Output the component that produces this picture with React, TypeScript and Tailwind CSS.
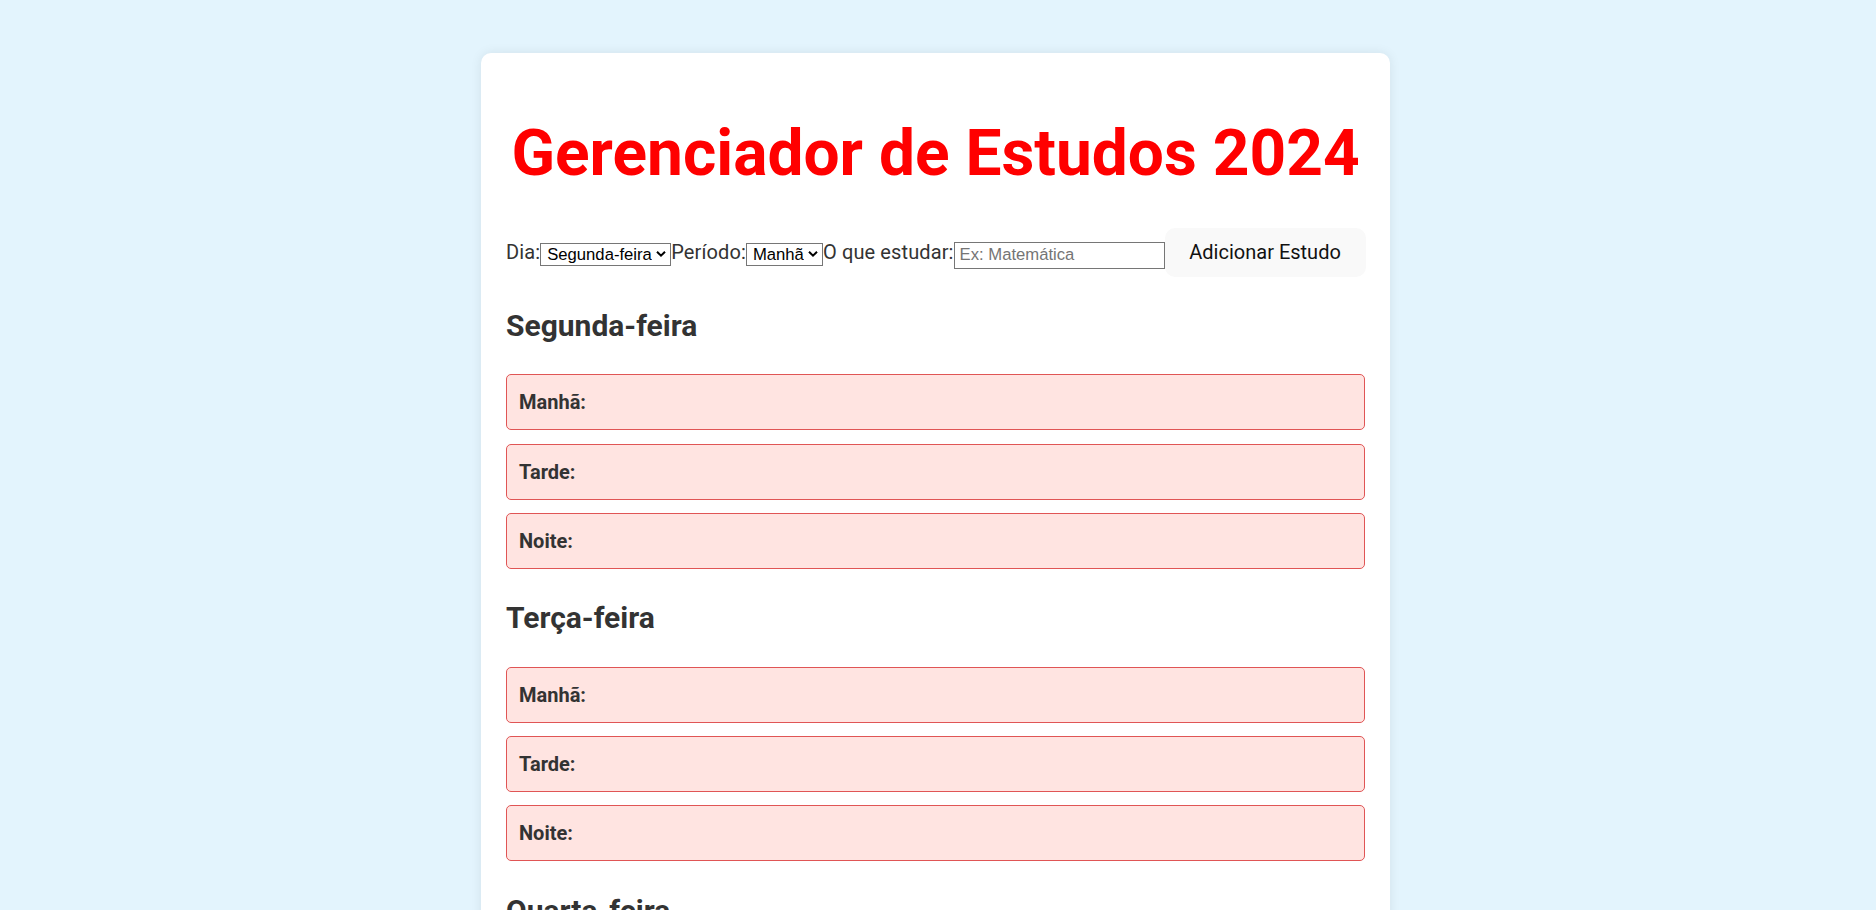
import React, { useState } from 'react';

const DAYS = ['Segunda-feira', 'Terça-feira', 'Quarta-feira', 'Quinta-feira', 'Sexta-feira', 'Sábado', 'Domingo'];
const PERIODS = ['Manhã', 'Tarde', 'Noite'];

type Plan = Record<string, Record<string, string[]>>;

const Chevron: React.FC = () => (
    <svg className="pointer-events-none absolute right-[5px] top-1/2 -translate-y-1/2 h-[7px] w-[10px]" viewBox="0 0 10 7" fill="none">
        <path d="M1 1.2l4 4 4-4" stroke="#000" strokeWidth={2} />
    </svg>
);

const NativeSelect: React.FC<{ value: string; options: string[]; onChange: (v: string) => void; width: string }> = ({ value, options, onChange, width }) => (
    <div className={`relative mt-[3px] shrink-0 ${width}`}>
        <select
            value={value}
            onChange={(e) => onChange(e.target.value)}
            className="appearance-none w-full h-[23px] border border-[#767676] bg-white pl-[6px] pr-[18px] text-[16.67px] leading-[21px] text-black font-['Liberation_Sans',Arial,sans-serif]"
        >
            {options.map((o) => <option key={o} value={o}>{o}</option>)}
        </select>
        <Chevron />
    </div>
);

const DaySection: React.FC<{ day: string; items: Record<string, string[]> }> = ({ day, items }) => (
    <section className="mb-[31.5px]">
        <h2 className="text-[30px] leading-[35px] font-bold text-[#333] mb-[31.3px]">{day}</h2>
        <div className="flex flex-col gap-[13.3px]">
            {PERIODS.map((p) => (
                <div key={p} className="h-[56px] px-[12px] py-[12px] rounded-[5px] border border-[#e05555] bg-[#ffe4e1] text-[20px] leading-[30px] text-[#333]">
                    <strong className="font-bold">{p}:</strong> {items[p].join(', ')}
                </div>
            ))}
        </div>
    </section>
);

export default function App() {
    const [day, setDay] = useState(DAYS[0]);
    const [period, setPeriod] = useState(PERIODS[0]);
    const [subject, setSubject] = useState('');
    const [plan, setPlan] = useState<Plan>(() =>
        Object.fromEntries(DAYS.map((d) => [d, Object.fromEntries(PERIODS.map((p) => [p, [] as string[]]))]))
    );

    const addStudy = () => {
        if (!subject.trim()) return;
        setPlan((prev) => ({ ...prev, [day]: { ...prev[day], [period]: [...prev[day][period], subject.trim()] } }));
        setSubject('');
    };

    return (
        <div className="min-h-screen bg-[#e3f4fd] pt-[53px] font-['Roboto','Liberation_Sans',sans-serif]">
            <div className="ml-[481px] w-[909px] rounded-[10px] bg-white px-[25px] pt-[25px] pb-[10px] shadow-[0_0_12px_rgba(0,0,0,0.08)]">
                <h1 className="mt-[41px] mb-[39px] text-center text-[64px] leading-[70px] font-bold text-[#ff0000]">
                    Gerenciador de Estudos 2024
                </h1>

                <div className="flex items-center whitespace-nowrap text-[20px] leading-[23px] text-[#333]">
                    <label className="shrink-0 tracking-[0.12px]">Dia:</label>
                    <NativeSelect value={day} options={DAYS} onChange={setDay} width="w-[131px]" />
                    <label className="shrink-0 tracking-[0.12px]">Período:</label>
                    <NativeSelect value={period} options={PERIODS} onChange={setPeriod} width="w-[77px]" />
                    <label className="shrink-0 tracking-[0.12px]">O que estudar:</label>
                    <input
                        value={subject}
                        onChange={(e) => setSubject(e.target.value)}
                        placeholder="Ex: Matemática"
                        className="shrink-0 mt-[5px] w-[211px] h-[27px] border border-[#767676] bg-white px-[5px] text-[16.67px] text-black placeholder:text-[#757575] font-['Liberation_Sans',Arial,sans-serif]"
                    />
                    <button
                        onClick={addStudy}
                        className="shrink-0 w-[201px] h-[49px] rounded-[10px] border border-transparent bg-[#f9f9f9] text-[20px] leading-[23px] font-normal text-[#111]"
                    >
                        Adicionar Estudo
                    </button>
                </div>

                <div className="mt-[31px]">
                    {DAYS.map((d) => <DaySection key={d} day={d} items={plan[d]} />)}
                </div>
            </div>
        </div>
    );
}
